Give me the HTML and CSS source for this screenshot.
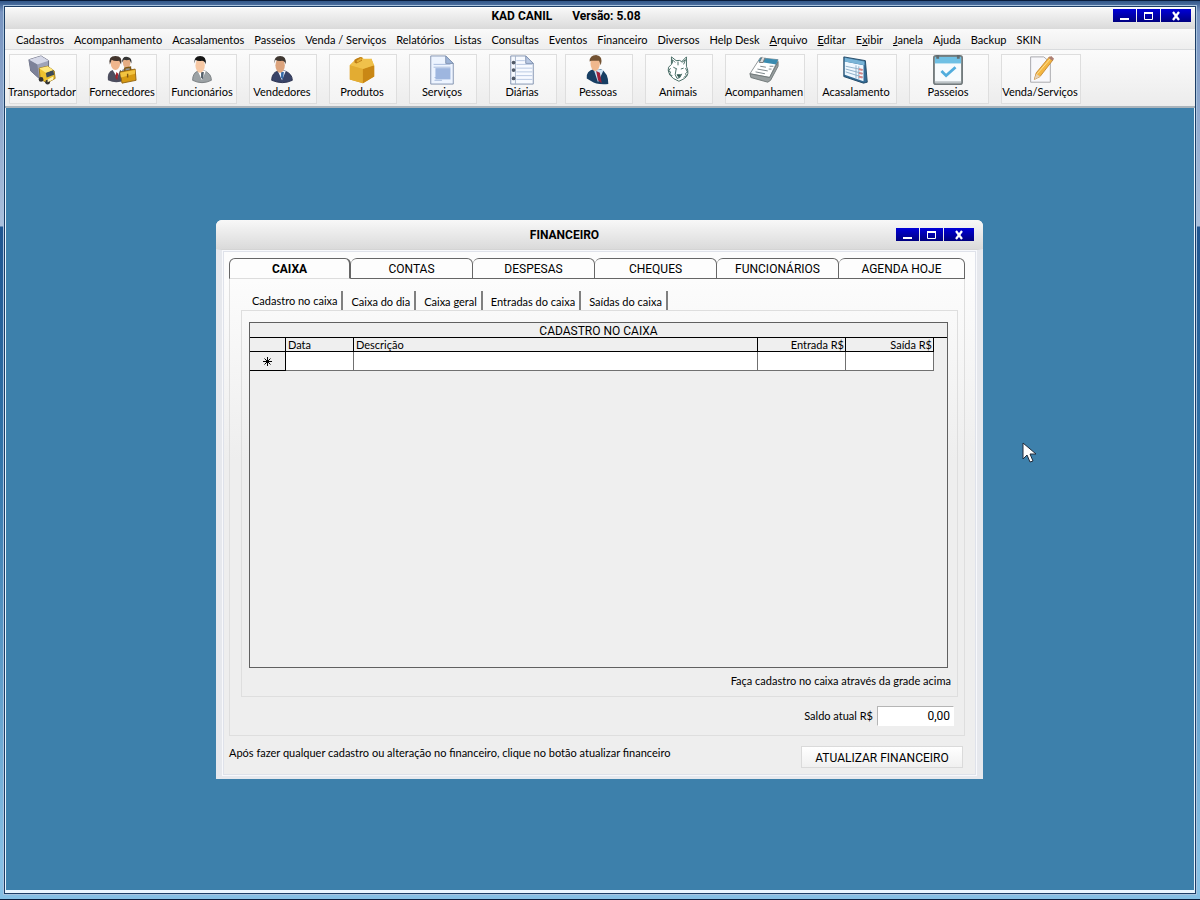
FILE: index.html
```
<!DOCTYPE html>
<html lang="pt-BR">
<head>
  <meta charset="UTF-8">
  <title>KAD CANIL</title>
  <link rel="stylesheet" href="styles.css">
</head>
<body>
  <div class="app">
    <header class="titlebar">
      <h1><span>KAD CANIL</span><span>Versão: 5.08</span></h1>
      <div class="win-buttons">
        <button type="button" aria-label="Minimizar"><svg width="12" height="12"><path d="M1 9h9" stroke="#fff" stroke-width="2"/></svg></button>
        <button type="button" aria-label="Maximizar"><svg width="12" height="12"><path d="M1.500 3v6.500h8V3" fill="none" stroke="#fff"/><path d="M1 3h9" stroke="#fff" stroke-width="2"/></svg></button>
        <button type="button" class="close" aria-label="Fechar"><svg width="12" height="12"><path d="M3 2l6 8M9 2l-6 8" stroke="#fff" stroke-width="2.200"/></svg></button>
      </div>
    </header>

    <nav class="menu">
      <a href="#">Cadastros</a>
      <a href="#">Acompanhamento</a>
      <a href="#">Acasalamentos</a>
      <a href="#">Passeios</a>
      <a href="#">Venda / Serviços</a>
      <a href="#">Relatórios</a>
      <a href="#">Listas</a>
      <a href="#">Consultas</a>
      <a href="#">Eventos</a>
      <a href="#">Financeiro</a>
      <a href="#">Diversos</a>
      <a href="#">Help Desk</a>
      <a href="#"><u>A</u>rquivo</a>
      <a href="#"><u>E</u>ditar</a>
      <a href="#">E<u>x</u>ibir</a>
      <a href="#"><u>J</u>anela</a>
      <a href="#">Ajuda</a>
      <a href="#">Backup</a>
      <a href="#">SKIN</a>
    </nav>

    <div class="toolbar">
      <div class="tool-group">
        <button type="button" class="tool">
          <svg viewBox="0 0 32 32">
            <path d="M2 5l13-4 8 5v15l-10 4L4 17z" fill="#9ea3b8" stroke="#686b7e"/>
            <path d="M2 5l13-4 8 5-12 4z" fill="#d5d8e7"/>
            <path d="M2 5l9 5 2 15-9-8z" fill="#7d8299"/>
            <path d="M13 14l9-2 7 5 1 8-9 5-7-5z" fill="#edc22f" stroke="#9b761b"/>
            <path d="M20 19l8-3 1 5-8 3z" fill="#3d4b58"/>
            <path d="M13 14l9-2 6 4-8 3z" fill="#ffe77a"/>
            <circle cx="15" cy="26" r="2.500" fill="#333"/><circle cx="22" cy="29" r="2.500" fill="#333"/>
            <path d="M22 26l6-3v3l-6 3z" fill="#fff5b8"/>
          </svg>
          <span>Transportador</span>
        </button>
        <button type="button" class="tool">
          <svg viewBox="0 0 32 32">
            <path d="M16 16q5-4 11-1l2 8H15z" fill="#8c929a"/>
            <ellipse cx="21" cy="8" rx="4" ry="6" fill="#e5ad83"/>
            <path d="M16 8q0-7 6-6 5 1 4 7l-2-4q-3 1-6 0z" fill="#353535"/>
            <path d="M1 27q-1-9 5-11h8q5 3 5 11-9 4-18 0z" fill="#4d4e5f"/>
            <path d="M6 16l5 8 3-8z" fill="#fff"/><path d="M10 18l2 2-1 7-2-3z" fill="#a4232c"/>
            <ellipse cx="9" cy="9" rx="5" ry="7" fill="#efb68d"/>
            <path d="M3 10Q1 1 9 1q8 0 6 9l-2-4Q8 7 5 5z" fill="#42342c"/>
            <path d="M14 18l16-3 1 12-15 3z" fill="#d79a12" stroke="#936514"/>
            <path d="M14 19l16-3v4l-15 4z" fill="#f2c340"/><path d="M19 17v-3l6-1v3M22 20v4" fill="none" stroke="#7f5710" stroke-width="1.500"/>
          </svg>
          <span>Fornecedores</span>
        </button>
        <button type="button" class="tool">
          <svg viewBox="0 0 32 32">
            <path d="M6 27q0-8 6-10h7q7 3 7 10-10 5-20 0z" fill="#9ca2a5" stroke="#777d80"/>
            <path d="M11 16l5 11 4-10z" fill="#fff"/><path d="M15 18h3l-1 8-2-2z" fill="#56616b"/>
            <ellipse cx="14" cy="11" rx="5" ry="8" fill="#f6c8a4"/>
            <path d="M8 9Q7 1 14 1q7 0 6 9-1-4-4-4-4 1-7-1z" fill="#151515"/>
          </svg>
          <span>Funcionários</span>
        </button>
        <button type="button" class="tool">
          <svg viewBox="0 0 32 32">
            <path d="M5 27q0-8 7-10h7q8 3 8 10-10 5-22 0z" fill="#394468" stroke="#272e4c"/>
            <path d="M11 16l5 11 4-10z" fill="#eef4ff"/><path d="M15 18h3l-1 8-2-2z" fill="#356aa8"/>
            <ellipse cx="14" cy="11" rx="5" ry="8" fill="#dca47d"/>
            <path d="M8 9Q7 1 14 1q7 0 6 9-1-4-4-4-4 1-7-1z" fill="#3f3731"/>
          </svg>
          <span>Vendedores</span>
        </button>
        <button type="button" class="tool">
          <svg viewBox="0 0 32 32">
            <path d="M3 11l7-7 6-2 3 4 7-2 3 8v11l-12 7L3 26z" fill="#dda126"/>
            <path d="M3 11l14 4v15L3 26z" fill="#e3ac32"/><path d="M17 15l12-4v12l-12 7z" fill="#c98715"/>
            <path d="M3 11l7-7 16 0 3 7-12 4z" fill="#f0c14b"/>
            <path d="M8 5l6-3 2 1v3l-6 3-2-1z" fill="#bd7c16"/><path d="M10 6l5-3 1 2-5 3z" fill="#e3ac32"/>
          </svg>
          <span>Produtos</span>
        </button>
        <button type="button" class="tool">
          <svg viewBox="0 0 32 32">
            <path d="M4 1h16l8 8v22H4z" fill="#edf4ff" stroke="#8192af"/>
            <path d="M20 1v8h8z" fill="#9db4d8" stroke="#8192af"/>
            <path d="M7 10h18M7 13h18M8 24h8M8 27h8" stroke="#a6bbdc"/>
            <path d="M9 14h16v12H9z" fill="#9eb6df"/>
          </svg>
          <span>Serviços</span>
        </button>
        <button type="button" class="tool">
          <svg viewBox="0 0 32 32">
            <path d="M4 1h16l8 8v22H4z" fill="#f7faff" stroke="#8192af"/>
            <path d="M20 1v8h8z" fill="#b9c9e4" stroke="#8192af"/>
            <path d="M10 6h9M10 10h17M10 14h17M10 18h17M10 22h17M10 26h17" stroke="#b5c6e1"/>
            <path d="M9 1v30" stroke="#a6b2c7"/>
            <g fill="#505967"><circle cx="7" cy="8" r="2"/><circle cx="7" cy="16" r="2"/><circle cx="7" cy="25" r="2"/></g>
          </svg>
          <span>Diárias</span>
        </button>
      </div>
      <div class="tool-group">
        <button type="button" class="tool">
          <svg viewBox="0 0 32 32">
            <path d="M4 25q-1-8 8-10h7q8 4 8 16-13 1-18-3z" fill="#173e63"/>
            <path d="M11 14l5 15 6-13z" fill="#cfe5f6"/><path d="M14 17l4 2 2 11-4-3z" fill="#9d213a"/>
            <ellipse cx="13" cy="9" rx="5" ry="8" fill="#f0b88d"/>
            <path d="M7 7Q7 0 14 0q8 1 5 11l-2-5H9z" fill="#735232"/>
          </svg>
          <span>Pessoas</span>
        </button>
        <button type="button" class="tool">
          <svg viewBox="0 0 32 32" fill="none" stroke="#40665f">
            <path d="M9 10L9 2l5 4q4-1 6 1l5-5v10q4 9-2 13l-6 3-6-3q-7-6-5-12z" fill="#fff"/>
            <path d="M10 9V5l3 3M22 10l2-5-4 3M8 14l-2 3 2 1-1 3 3 1M24 14l2 4-2 2 1 2-3 2M16 7v4M11 13l4 2M22 14l-3 1"/>
            <path d="M14 15l-1 6 2 4 3-1 2-4" /><path d="M15 21h4l-2 3z" fill="#2b4a45"/>
          </svg>
          <span>Animais</span>
        </button>
        <button type="button" class="tool wide">
          <svg viewBox="0 0 32 32">
            <path d="M12 3l19 2-9 19-21-4z" fill="#fff" stroke="#8b9193"/>
            <path d="M12 3l19 2-2 5-19-3z" fill="#3a8bb0"/>
            <path d="M1 20l21 4 9-17v5l-8 15-3 2-18-5z" fill="#999fa0" stroke="#6f7778"/>
            <path d="M12 12l6 1M9 15l11 2M7 18l10 2M22 12h4M21 15h3" stroke="#788185"/>
            <path d="M14 2l-3 6h4l2-5" fill="#ddd" stroke="#777"/>
          </svg>
          <span>Acompanhamen</span>
        </button>
        <button type="button" class="tool wide">
          <svg viewBox="0 0 32 32">
            <path d="M3 2l23 4 2 23-4 1-21-7z" fill="#336b95" stroke="#214966"/>
            <path d="M4 7l20 4v17L4 21z" fill="#eff8ff"/><path d="M4 3l21 4v4L4 7z" fill="#79b4d7"/>
            <path d="M5 12l19 4M5 15l19 5M5 18l19 6" stroke="#8daec7"/>
            <path d="M16 11v14M19 12v14" stroke="#8daec7"/>
            <path d="M19 15l4 1M19 19l4 1M19 23l4 1" stroke="#d88785" stroke-width="2"/>
          </svg>
          <span>Acasalamento</span>
        </button>
        <button type="button" class="tool wide">
          <svg viewBox="0 0 32 32">
            <rect x="1" y="1" width="30" height="30" rx="2" fill="#f7fbfd" stroke="#737b7d" stroke-width="2"/>
            <path d="M2 2h28v7H2z" fill="#6fc0e4"/><path d="M2 29h28" stroke="#bcc3c6" stroke-width="2"/>
            <path d="M5 0v4M27 0v4" stroke="#606b70" stroke-width="3"/><path d="M9 17l5 5 10-9" fill="none" stroke="#51addd" stroke-width="3"/>
          </svg>
          <span>Passeios</span>
        </button>
        <button type="button" class="tool wide">
          <svg viewBox="0 0 32 32">
            <path d="M6 2h14l7 6v21H6z" fill="#f8f8fb" stroke="#a5a5aa"/>
            <path d="M10 26l2-7L26 2l4 3-14 18z" fill="#f4b641" stroke="#c68a35"/><path d="M13 20L27 4" stroke="#ffe298"/>
            <path d="M10 26l2-6 4 3z" fill="#e6d1b5"/><path d="M25 3l3-2 3 3-2 2z" fill="#ad7f73"/>
          </svg>
          <span>Venda/Serviços</span>
        </button>
      </div>
    </div>

    <main class="desktop">
      <section class="window">
        <header class="titlebar">
          <h2>FINANCEIRO</h2>
          <div class="win-buttons">
            <button type="button" aria-label="Minimizar"><svg width="12" height="12"><path d="M1 9h9" stroke="#fff" stroke-width="2"/></svg></button>
            <button type="button" aria-label="Maximizar"><svg width="12" height="12"><path d="M1.500 3v6.500h8V3" fill="none" stroke="#fff"/><path d="M1 3h9" stroke="#fff" stroke-width="2"/></svg></button>
            <button type="button" class="close" aria-label="Fechar"><svg width="12" height="12"><path d="M3 2l6 8M9 2l-6 8" stroke="#fff" stroke-width="2.200"/></svg></button>
          </div>
        </header>
        <div class="window-body">
          <div class="tabs">
            <button type="button" class="active">CAIXA</button>
            <button type="button">CONTAS</button>
            <button type="button">DESPESAS</button>
            <button type="button">CHEQUES</button>
            <button type="button">FUNCIONÁRIOS</button>
            <button type="button">AGENDA HOJE</button>
          </div>
          <div class="tab-panel">
            <div class="subtabs">
              <button type="button" class="active">Cadastro no caixa</button>
              <button type="button">Caixa do dia</button>
              <button type="button">Caixa geral</button>
              <button type="button">Entradas do caixa</button>
              <button type="button">Saídas do caixa</button>
            </div>
            <div class="subpanel">
              <div class="grid">
                <h3>CADASTRO NO CAIXA</h3>
                <table>
                  <thead>
                    <tr><th class="mark"></th><th class="date">Data</th><th>Descrição</th><th class="money">Entrada R$</th><th class="money">Saída R$</th></tr>
                  </thead>
                  <tbody>
                    <tr><th class="mark"><svg width="9" height="9"><path d="M4.500 0v9M0 4.500h9M1.500 1.500l6 6M7.500 1.500l-6 6" stroke="#000"/></svg></th><td></td><td></td><td></td><td></td></tr>
                  </tbody>
                </table>
              </div>
              <p class="hint">Faça cadastro no caixa através da grade acima</p>
            </div>
            <div class="balance">
              <label for="saldo">Saldo atual R$</label>
              <input type="text" id="saldo" value="0,00">
            </div>
          </div>
          <footer>
            <p>Após fazer qualquer cadastro ou alteração no financeiro, clique no botão atualizar financeiro</p>
            <button type="button" class="update">ATUALIZAR FINANCEIRO</button>
          </footer>
        </div>
      </section>

      <svg class="cursor" width="15" height="22" viewBox="0 0 15 22">
        <path d="M1 1v16l4-4 3 7 3-1-3-7h6z" fill="#fff" stroke="#222b3a"/>
      </svg>
    </main>
  </div>
</body>
</html>
```
FILE: styles.css
```
* {
  box-sizing: border-box;
}
body {
  display: flex;
  min-height: 100vh;
  margin: 0;
  padding: 5px 4px;
  border: solid #0a1d3c;
  border-width: 1px 0;
  font-family: Lato, "Liberation Sans", sans-serif;
  font-size: 11px;
  line-height: 14px;
  color: #000;
  background: linear-gradient(#2b5285 0, #7894c0 12px, #a9bfdc 226px, #1f5590 227px, #3173a8 450px, #86bfe4 860px);
}
button, input {
  font: inherit;
  color: inherit;
  padding: 0;
}
h1, h2, h3, p {
  margin: 0;
  font-size: inherit;
}
p {
  font-weight: normal;
}
.app {
  flex: 1;
  display: flex;
  flex-direction: column;
  border: 1px solid #1c3d66;
  box-shadow: 0 0 0 1px #a9c4df;
}

/* title bars */
.titlebar {
  display: flex;
  align-items: center;
  justify-content: center;
  position: relative;
  height: 22px;
  background: linear-gradient(#f8f8f8, #dadada);
}
.app > .titlebar {
  border-top: 1px solid #fff;
  padding-bottom: 6px;
}
h1, h2 {
  font: bold 12px/14px Roboto, "Liberation Sans", sans-serif;
}
h1 {
  display: flex;
  gap: 20px;
  margin-right: 68px;
}
.win-buttons {
  position: absolute;
  top: 1px;
  right: 4px;
  display: flex;
  gap: 1px;
}
.win-buttons button {
  display: flex;
  align-items: center;
  justify-content: center;
  width: 23px;
  height: 13px;
  border: 0;
  background: linear-gradient(#0000d8, #000080);
}
.win-buttons .close {
  width: 30px;
}

/* menu and toolbar */
.menu {
  display: flex;
  align-items: center;
  gap: 10px;
  height: 21px;
  padding: 2px 0 0 11px;
  background: linear-gradient(#fafafa, #eeeeee);
  border-bottom: 1px solid #d9dbdd;
}
.menu a {
  color: #000;
  text-decoration: none;
  white-space: nowrap;
}
.toolbar {
  display: flex;
  gap: 8px;
  height: 58px;
  padding: 4px;
  background: linear-gradient(#fbfbfb, #ececec);
  border-bottom: 2px solid #a9b3bb;
}
.tool-group {
  display: flex;
  gap: 12px;
}
.tool {
  display: flex;
  flex-direction: column;
  align-items: center;
  width: 68px;
  height: 50px;
  padding-right: 2px;
  border: 1px solid #dedede;
  background: linear-gradient(#fcfcfc, #f3f3f3);
  white-space: nowrap;
}
.tool.wide {
  width: 80px;
}
.tool svg {
  width: 30px;
  height: 30px;
  flex: none;
}

/* desktop */
.desktop {
  flex: 1;
  position: relative;
  background: #3d80ab;
  border: solid #eaf6ff;
  border-width: 0 1px 3px;
}
.window {
  position: absolute;
  top: 112px;
  left: 210px;
  width: 767px;
  border-radius: 6px 6px 0 0;
  background: linear-gradient(#fcfcfc 60px, #eeeeee 240px);
}
.window .titlebar {
  height: 29px;
  border-radius: 6px 6px 0 0;
}
.window .titlebar h2 {
  margin-right: 70px;
}
.window .win-buttons {
  top: 8px;
  right: 9px;
}
.window-body {
  padding: 8px 12px 8px 7px;
  border: solid #e6e8ed;
  border-width: 1px 6px 3px;
  border-top-color: #d4d4d4;
  box-shadow: inset 0 0 0 1px #f8f9fc, inset 0 0 0 2px #dfe2ea;
}
.tabs {
  display: flex;
}
.tabs button {
  width: 122px;
  height: 21px;
  border: 1px solid #666;
  border-left-width: 0;
  border-radius: 6px 6px 0 0;
  background: #fdfdfd;
  font: 12px/14px Roboto, "Liberation Sans", sans-serif;
}
.tabs button:last-child {
  flex: 1;
}
.tabs .active {
  border-left-width: 1px;
  border-right-width: 2px;
  border-bottom-color: #ddd;
  font-weight: bold;
}
.tab-panel {
  padding: 12px 6px 9px 11px;
  border: 1px solid #dedede;
  border-top: 0;
}
.subtabs {
  display: flex;
  height: 19px;
  padding-left: 6px;
}
.subtabs button {
  padding: 2px 4px 0 8px;
  border: 0;
  border-right: 2px solid #808080;
  background: none;
  white-space: nowrap;
}
.subtabs .active {
  padding: 0 4px 0 5px;
}
.subpanel {
  padding: 11px 9px 8px 7px;
  border: 1px solid #dedede;
}
.grid {
  height: 346px;
  border: 1px solid #606060;
  background: #efefef;
}
.grid h3 {
  height: 15px;
  border-bottom: 1px solid #000;
  font: 12px/16px Roboto, "Liberation Sans", sans-serif;
  text-align: center;
}
table {
  width: calc(100% - 13px);
  table-layout: fixed;
  border-collapse: separate;
  border-spacing: 0;
}
th, td {
  height: 19px;
  padding: 0 2px;
  border-right: 1px solid #707070;
  border-bottom: 1px solid #707070;
  background: #fff;
}
thead th {
  height: 14px;
  line-height: 13px;
  border-color: #000;
  background: #efefef;
  font-weight: normal;
  text-align: left;
}
.mark {
  width: 36px;
  border-color: #000;
  background: #efefef;
  line-height: 9px;
}
.date {
  width: 68px;
}
thead .money {
  width: 88px;
  padding-right: 1px;
  text-align: right;
}
.hint {
  margin-top: 6px;
  margin-right: -3px;
  text-align: right;
}
.balance {
  display: flex;
  align-items: center;
  justify-content: flex-end;
  gap: 4px;
  margin-top: 9px;
  padding-right: 4px;
}
.balance input {
  width: 77px;
  height: 20px;
  padding-right: 3px;
  border: 1px solid #fff;
  border-top-color: #b5b5b5;
  border-left-color: #b5b5b5;
  background: #fff;
  font: 12px/14px Roboto, "Liberation Sans", sans-serif;
  text-align: right;
}
footer {
  display: flex;
  justify-content: space-between;
  margin-top: 10px;
}
.update {
  width: 162px;
  height: 22px;
  margin-right: 2px;
  padding-top: 2px;
  border: 1px solid #dadada;
  background: linear-gradient(#fff, #f0f0f0);
  font: 12px/14px Roboto, "Liberation Sans", sans-serif;
}
.cursor {
  position: absolute;
  top: 334px;
  left: 1016px;
}
```
